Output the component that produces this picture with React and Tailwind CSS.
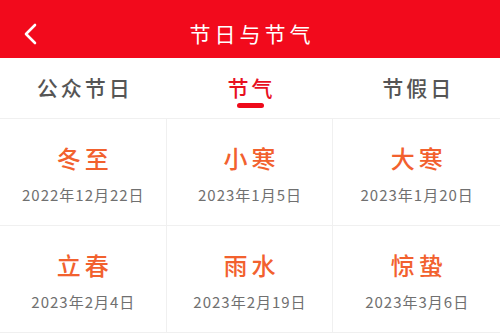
import { useState } from "react";

const terms = [
  { name: "冬至", date: "2022年12月22日" },
  { name: "小寒", date: "2023年1月5日" },
  { name: "大寒", date: "2023年1月20日" },
  { name: "立春", date: "2023年2月4日" },
  { name: "雨水", date: "2023年2月19日" },
  { name: "惊蛰", date: "2023年3月6日" },
];

const tabs = ["公众节日", "节气", "节假日"];

export default function App() {
  const [active, setActive] = useState(1);

  return (
    <div
      className="w-[500px] h-[335px] overflow-hidden bg-white"
      style={{ fontFamily: '"Noto Sans CJK SC", "Noto Sans", sans-serif' }}
    >
      {/* header */}
      <div className="relative h-[58px] bg-[#f20a1c] flex items-center justify-center">
        <button className="absolute left-[22px] top-[22px] p-0">
          <svg width="16" height="24" viewBox="0 0 16 24" fill="none">
            <path
              d="M13 3 L4 12 L13 21"
              stroke="#fff"
              strokeWidth="2.6"
              strokeLinecap="round"
              strokeLinejoin="round"
            />
          </svg>
        </button>
        <h1 className="text-white text-[21px] tracking-[4px] mt-[10px] pl-[4px]">节日与节气</h1>
      </div>

      {/* tabs */}
      <div className="h-[61px] flex border-b border-[#f0f0f0]">
        {tabs.map((t, i) => (
          <button
            key={t}
            onClick={() => setActive(i)}
            className="flex-1 flex flex-col items-center pt-[15px]"
          >
            <span
              className={
                i === active
                  ? "text-[21px] leading-[28px] text-[#e8101f] font-medium tracking-[3px] pl-[3px]"
                  : "text-[21px] leading-[28px] text-[#555] font-medium tracking-[3px] pl-[3px]"
              }
            >
              {t}
            </span>
            {i === active && (
              <span className="mt-[2px] w-[27px] h-[5px] rounded-full bg-[#ee0a1a]" />
            )}
          </button>
        ))}
      </div>

      {/* grid */}
      <div className="grid grid-cols-3">
        {terms.map((s, i) => (
          <div
            key={s.name}
            className={
              "h-[107px] flex flex-col items-center border-b border-[#f0f0f0] " +
              (i % 3 !== 2 ? "border-r" : "")
            }
          >
            <div className="mt-[24px] text-[24px] leading-[30px] text-[#f2612e] font-medium tracking-[4px] pl-[4px]">
              {s.name}
            </div>
            <div className="mt-[12px] text-[15px] leading-[20px] text-[#707070] tracking-[1px] pl-[1px]">
              {s.date}
            </div>
          </div>
        ))}
      </div>
    </div>
  );
}
